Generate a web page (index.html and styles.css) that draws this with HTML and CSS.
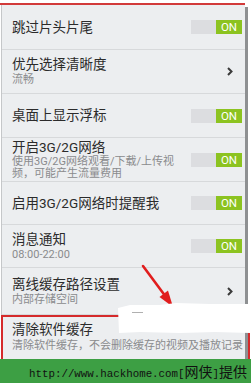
FILE: index.html
```html
<!DOCTYPE html>
<html lang="zh-CN">
<head>
<meta charset="utf-8">
<title>设置</title>
<link rel="stylesheet" href="styles.css">
</head>
<body>
<div class="screen">
  <div class="top-rule"></div>
  <div class="main">
    <div class="list">
      <div class="row r1">
        <div class="row-text"><div class="title">跳过片头片尾</div></div>
        <div class="toggle"><span class="toggle-off"></span><span class="toggle-on">ON</span></div>
      </div>
      <div class="row r2">
        <div class="row-text"><div class="title">优先选择清晰度</div><div class="sub">流畅</div></div>
        <svg class="chevron" width="6" height="9" viewBox="0 0 6 9"><path d="M1 1 L4.5 4.5 L1 8" fill="none" stroke="#3a3a3a" stroke-width="2"/></svg>
      </div>
      <div class="row r3">
        <div class="row-text"><div class="title">桌面上显示浮标</div></div>
        <div class="toggle"><span class="toggle-off"></span><span class="toggle-on">ON</span></div>
      </div>
      <div class="row r4">
        <div class="row-text"><div class="title">开启3G/2G网络</div><div class="sub wrap">使用3G/2G网络观看/下载/上传视频，可能产生流量费用</div></div>
        <div class="toggle"><span class="toggle-off"></span><span class="toggle-on">ON</span></div>
      </div>
      <div class="row r5">
        <div class="row-text"><div class="title">启用3G/2G网络时提醒我</div></div>
        <div class="toggle"><span class="toggle-off"></span><span class="toggle-on">ON</span></div>
      </div>
      <div class="row r6">
        <div class="row-text"><div class="title">消息通知</div><div class="sub">08:00-22:00</div></div>
        <div class="toggle"><span class="toggle-off"></span><span class="toggle-on">ON</span></div>
      </div>
      <div class="row r7">
        <div class="row-text"><div class="title">离线缓存路径设置</div><div class="sub">内部存储空间</div></div>
        <svg class="chevron" width="6" height="9" viewBox="0 0 6 9"><path d="M1 1 L4.5 4.5 L1 8" fill="none" stroke="#3a3a3a" stroke-width="2"/></svg>
      </div>
      <div class="row r8">
        <div class="row-text"><div class="title">清除软件缓存</div><div class="sub nowrap">清除软件缓存，不会删除缓存的视频及播放记录</div></div>
      </div>
    </div>
    <div class="scrollbar"></div>
  </div>
  <div class="banner"><span class="url">http://www.hackhome.com[</span><span class="cn">网侠</span><span class="url">]</span><span class="cn">提供</span></div>
  <div class="redbox"></div>
  <svg class="annot" width="251" height="383" viewBox="0 0 251 383">
    <line x1="143" y1="266" x2="166" y2="297" stroke="#e11d1d" stroke-width="2.6" stroke-linecap="round"/>
    <polygon points="173,307 159.5,297 168,290.5" fill="#e11d1d"/>
    <polygon points="118,308 130,305 160,305 176,303 210,304 250,304 250,333 215,332 180,333 140,332 119,333" fill="#ffffff"/>
    <line x1="132" y1="312.5" x2="143" y2="312.5" stroke="#b0b0b0" stroke-width="1"/>
  </svg>
</div>
</body>
</html>
```

FILE: styles.css
```css
html, body {
  margin: 0;
  padding: 0;
  background: #ffffff;
}

body {
  width: 251px;
  height: 383px;
  overflow: hidden;
  font-family: Roboto, "Noto Sans CJK SC", sans-serif;
}

.screen {
  position: relative;
  width: 251px;
  height: 383px;
  display: flex;
  flex-direction: column;
}

.top-rule {
  height: 2px;
  margin-top: 3px;
  margin-right: 6px;
  background: #d23a3a;
}

.main {
  flex: 1;
  min-height: 0;
  display: flex;
}

.list {
  flex: 0 0 243px;
  margin-left: 1px;
  border-left: 1px solid #c5c7c9;
  background: #eceef0;
  display: flex;
  flex-direction: column;
}

.scrollbar {
  width: 3px;
  margin-top: 2px;
  background: #8e9092;
}

.row {
  display: flex;
  align-items: center;
  padding-left: 10px;
  border-bottom: 1px solid #d7d9db;
  box-sizing: border-box;
  flex: none;
}

.r1 { height: 45px; }
.r2 { height: 44px; }
.r3 { height: 44px; }
.r4 { height: 44px; }
.r5 { height: 43px; }
.r6 { height: 43px; }
.r7 { height: 47px; }
.r8 { height: 44px; border-bottom: none; }

.row-text {
  flex: 1;
  min-width: 0;
}

.title {
  font-size: 13.5px;
  line-height: 17px;
  color: #2b2b2b;
}

.sub {
  font-size: 11px;
  line-height: 14px;
  color: #8a8b8d;
}

.sub.wrap {
  line-height: 12px;
  max-width: 166px;
}

.sub.nowrap {
  white-space: nowrap;
  line-height: 16px;
}

.toggle {
  display: flex;
  width: 51px;
  height: 14px;
  margin-right: 3px;
  flex: none;
}

.toggle-off {
  flex: 1;
  background: #dcdde0;
}

.toggle-on {
  width: 26px;
  background: #8cc320;
  color: #ffffff;
  font-size: 11.5px;
  line-height: 14px;
  text-align: center;
}

.chevron {
  flex: none;
  margin-right: 12px;
}

.banner {
  height: 24px;
  flex: none;
  background: #3d9f44;
  color: #111111;
  padding-left: 29px;
  line-height: 24px;
  white-space: nowrap;
}

.url {
  font-family: "Liberation Mono", monospace;
  font-size: 10.8px;
}

.cn {
  font-family: "Noto Sans CJK SC", sans-serif;
  font-size: 14px;
}

.redbox {
  position: absolute;
  left: 1px;
  top: 315px;
  width: 249px;
  height: 44px;
  border: 2px solid #d52a2b;
  border-bottom: none;
  box-sizing: border-box;
}

.annot {
  position: absolute;
  left: 0;
  top: 0;
  pointer-events: none;
}
```
